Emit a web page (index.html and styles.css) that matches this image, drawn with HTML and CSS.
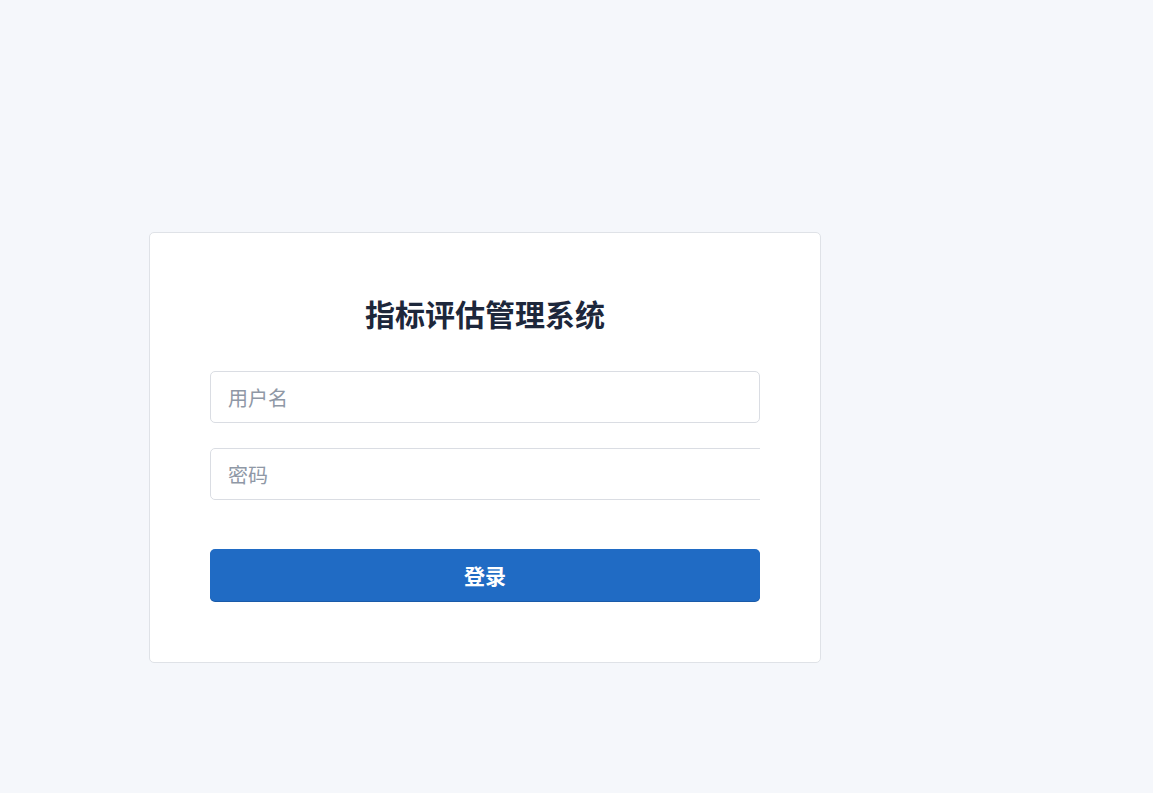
FILE: index.html
```html
<!DOCTYPE html>
<html lang="zh-CN">
<head>
<meta charset="utf-8">
<title>指标评估管理系统</title>
<link rel="stylesheet" href="styles.css">
</head>
<body>
<main class="page">
  <form class="card">
    <h1 class="title">指标评估管理系统</h1>
    <div class="field">
      <input class="input" type="text" placeholder="用户名">
    </div>
    <div class="field field-clip">
      <input class="input input-wide" type="password" placeholder="密码">
    </div>
    <button class="btn" type="button">登录</button>
  </form>
</main>
</body>
</html>
```
FILE: styles.css
```css
* { box-sizing: border-box; }
html, body { margin: 0; padding: 0; }
body {
  background: #f5f7fb;
  font-family: "Noto Sans CJK SC", "Noto Sans", sans-serif;
  color: #1d273b;
  min-height: 793px;
}
.page {
  padding: 232px 0 0 149px;
  display: flex;
  align-items: flex-start;
}
.card {
  width: 672px;
  background: #fff;
  border: 1px solid #dfe2e7;
  border-radius: 5px;
  padding: 60px 60px 61px;
  display: flex;
  flex-direction: column;
}
.title {
  margin: 0 0 37px;
  font-size: 30px;
  line-height: 41px;
  font-weight: 700;
  text-align: center;
  color: #1d273b;
}
.field { height: 52px; }
.field + .field { margin-top: 25px; }
.field-clip { overflow: hidden; }
.input {
  display: block;
  width: 100%;
  height: 52px;
  border: 1px solid #dadde3;
  border-radius: 5px;
  padding: 0 17px;
  font-family: inherit;
  font-size: 20px;
  color: #1d273b;
  background: #fff;
  outline: none;
}
.input-wide { width: calc(100% + 20px); }
.input::placeholder { color: #8f98a6; }
.btn {
  margin-top: 49px;
  height: 52px;
  border: 0;
  border-radius: 5px;
  background: #206bc4;
  color: #fff;
  font-family: inherit;
  font-size: 21px;
  font-weight: 700;
  box-shadow: 0 1px 0 #1a5aa8;
  cursor: pointer;
}
```
